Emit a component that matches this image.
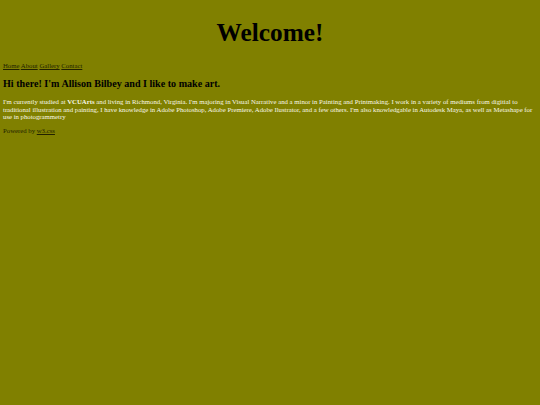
export default function App() {
  return (
    <div className="min-h-[405px] w-full bg-[#808000] px-[3px] font-['Liberation_Serif',serif]">
      <h1 className="pt-[17px] text-center text-[25.3px] font-bold leading-[30px] text-black">Welcome!</h1>
      <nav className="mt-[15px] text-[6.75px] leading-[8px] text-[#222200]">
        <a className="underline">Home</a> <a className="underline">About</a> <a className="underline">Gallery</a> <a className="underline">Contact</a>
      </nav>
      <h2 className="mt-[7px] text-[10.1px] font-bold leading-[13px] text-black">Hi there! I'm Allison Bilbey and I like to make art.</h2>
      <p className="mt-[8px] text-[6.75px] leading-[7.6px] text-[#f8f8e8]">
        I'm currently studied at <b>VCUArts</b> and living in Richmond, Virginia. I'm majoring in Visual Narrative and a minor in Painting and Printmaking. I work in a variety of mediums from digitial to traditional illustration and painting, I have knowledge in Adobe Photoshop, Adobe Premiere, Adobe Ilustrator, and a few others. I'm also knowledgable in Autodesk Maya, as well as Metashape for use in photogrammetry
      </p>
      <p className="mt-[6px] text-[6.75px] leading-[8px] text-[#222200]">
        Powered by <a className="underline">w3.css</a>
      </p>
    </div>
  );
}
